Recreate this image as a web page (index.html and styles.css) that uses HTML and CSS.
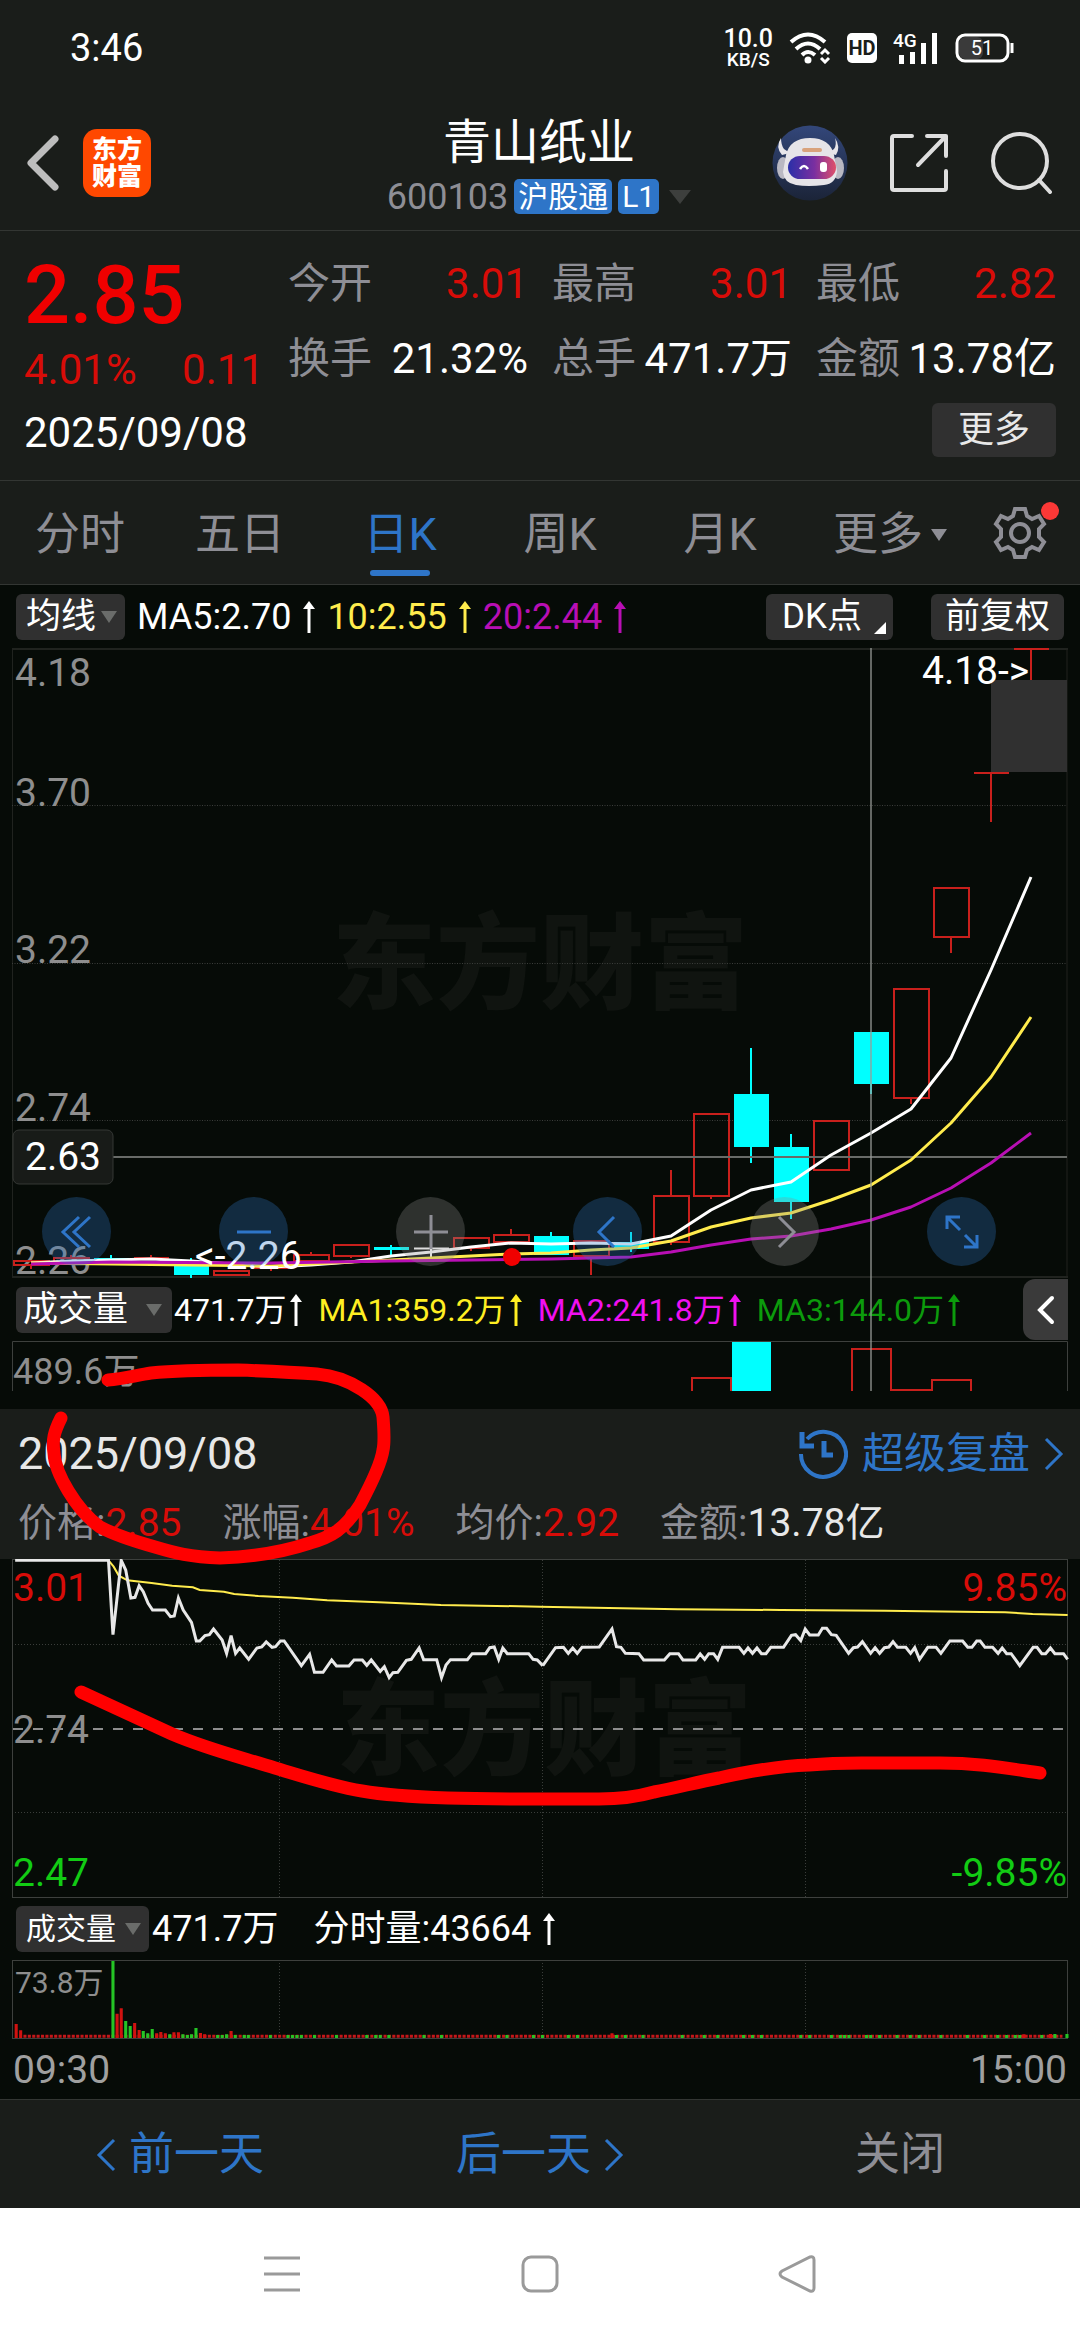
FILE: index.html
```html
<!DOCTYPE html>
<html lang="zh-CN">
<head>
<meta charset="utf-8">
<meta name="viewport" content="width=device-width, initial-scale=1">
<title>青山纸业 600103</title>
<link rel="stylesheet" href="styles.css">
</head>
<body>
<svg class="defs" width="0" height="0" aria-hidden="true">
  <symbol id="up" viewBox="0 0 12 32"><path d="M4.500 8h3v24h-3z"/><path d="M6 0l6 8H0z"/></symbol>
  <symbol id="caret" viewBox="0 0 16 12"><path d="M0 0h16L8 12z"/></symbol>
  <symbol id="next" viewBox="0 0 20 34"><path d="M2 2l15 15L2 32" fill="none" stroke="currentColor" stroke-width="3"/></symbol>
  <symbol id="prev" viewBox="0 0 20 34"><path d="M18 2L3 17l15 15" fill="none" stroke="currentColor" stroke-width="3"/></symbol>
</svg>

<div class="status">
  <time class="clock">3:46</time>
  <div class="status-icons">
    <div class="speed"><b>10.0</b><span>KB/S</span></div>
    <svg class="wifi" width="42" height="32" viewBox="0 0 42 32" fill="none" stroke="#fff" stroke-width="4">
      <path d="M2 10Q19-5 36 10M7 17Q19 6 31 17M13 23Q19 17 26 23"/><circle cx="19" cy="28" r="3.5" fill="#fff" stroke="none"/>
      <path d="M32 22l4-4 4 4M32 26l4 4 4-4" stroke-width="3"/>
    </svg>
    <svg class="hd" width="30" height="30" viewBox="0 0 30 30"><rect width="30" height="30" rx="5" fill="#fff"/><text x="15" y="22" text-anchor="middle" font-size="20" font-weight="700" fill="#1a1d1a">HD</text></svg>
    <svg class="signal" width="46" height="40" viewBox="0 -4 46 40" fill="#fff"><text x="0" y="15" font-size="19" font-weight="500">4G</text><path d="M6 23h5v9H6zM17 20h5v12h-5zM28 11h5v21h-5zM39 1h5v31h-5z"/></svg>
    <svg class="battery" width="60" height="30" viewBox="0 0 60 30"><rect x="4" y="4" width="24" height="22" rx="6" fill="#3a3a3a"/><rect x="2" y="2" width="51" height="26" rx="8" fill="none" stroke="#fff" stroke-width="3"/><path d="M57 10v10" stroke="#fff" stroke-width="3"/><text x="27" y="22" text-anchor="middle" font-size="20" fill="#fff">51</text></svg>
  </div>
</div>

<header class="header">
  <div class="header-left">
    <button class="plain" aria-label="返回"><svg width="34" height="58" viewBox="0 0 34 58" fill="none" stroke="#bdbdbd" stroke-width="7" stroke-linecap="round" stroke-linejoin="round"><path d="M29 5L5 29l24 24"/></svg></button>
    <a class="logo" href="#">东方<br>财富</a>
  </div>
  <div class="title">
    <h1>青山纸业</h1>
    <div class="code"><span>600103</span><span class="chip">沪股通</span><span class="chip">L1</span><svg class="code-caret" width="22" height="14" viewBox="0 0 16 12" preserveAspectRatio="none"><path d="M0 0h16L8 12z"/></svg></div>
  </div>
  <div class="header-right">
    <button class="plain" aria-label="智能助手"><svg width="76" height="76" viewBox="0 0 76 76">
      <defs><linearGradient id="sky" x2="0" y2="1"><stop stop-color="#33477a"/><stop offset="1" stop-color="#1b2438"/></linearGradient><linearGradient id="visor"><stop stop-color="#2a2fa8"/><stop offset=".55" stop-color="#7a2fa0"/><stop offset="1" stop-color="#e0506a"/></linearGradient></defs>
      <circle cx="38" cy="38" r="37.500" fill="url(#sky)"/>
      <path d="M9 13q-6 9 1 17l8-2-6-4q-3-4-3-11zM63 13q6 9 1 17l-8-2 6-4q3-4 1-11z" fill="#e8e6ea"/>
      <ellipse cx="11" cy="43" rx="6" ry="11" fill="#b9b8c2"/><ellipse cx="66" cy="43" rx="6" ry="11" fill="#b9b8c2"/>
      <path d="M14 30Q18 13 38 13t24 17l3 16q-1 13-13 14-16 2-28 0-12-2-13-13z" fill="#e6e4e8"/>
      <rect x="16" y="31" width="48" height="23" rx="12" fill="url(#visor)"/>
      <path d="M28 44q4-6 8 0" fill="none" stroke="#fff" stroke-width="2.500"/><rect x="48" y="37" width="7" height="10" rx="3" fill="#fff"/>
      <rect x="30" y="23" width="20" height="4" rx="2" fill="#d9a27c"/>
    </svg></button>
    <button class="plain" aria-label="分享"><svg width="60" height="60" viewBox="0 0 60 60" fill="none" stroke="#dedede" stroke-width="4" stroke-linecap="round" stroke-linejoin="round"><path d="M23 3H5q-2 0-2 2v50q0 2 2 2h50q2 0 2-2V38M38 3h19v20M57 3L29 32"/></svg></button>
    <button class="plain" aria-label="搜索"><svg width="62" height="62" viewBox="0 0 62 62" fill="none" stroke="#dedede" stroke-width="4" stroke-linecap="round"><circle cx="30" cy="29" r="27"/><path d="M49 48l11 12"/></svg></button>
  </div>
</header>

<section class="quote">
  <div class="price">
    <strong>2.85</strong>
    <div class="change"><span>4.01%</span><span>0.11</span></div>
  </div>
  <dl class="stats">
    <div><dt>今开</dt><dd class="up">3.01</dd></div>
    <div><dt>最高</dt><dd class="up">3.01</dd></div>
    <div><dt>最低</dt><dd class="up">2.82</dd></div>
    <div><dt>换手</dt><dd>21.32%</dd></div>
    <div><dt>总手</dt><dd>471.7万</dd></div>
    <div><dt>金额</dt><dd>13.78亿</dd></div>
  </dl>
  <time class="quote-date">2025/09/08</time>
  <button class="more">更多</button>
</section>

<nav class="tabs">
  <button>分时</button>
  <button>五日</button>
  <button class="active">日K</button>
  <button>周K</button>
  <button>月K</button>
  <button class="tab-more">更多<svg width="16" height="12"><use href="#caret"/></svg></button>
  <button class="gear" aria-label="设置"><svg width="54" height="54" viewBox="-27 -27 54 54" fill="none" stroke="#8e8e95" stroke-width="4"><path d="M-5-24H5L7-17 12-14 19-17 24-9 19-4V4L24 9 19 17 12 14 7 17 5 24H-5L-7 17-12 14-19 17-24 9-19 4V-4L-24-9-19-17-12-14-7-17z"/><circle r="9"/></svg><i class="dot"></i></button>
</nav>

<main>
<section class="kline">
  <div class="ma-row">
    <button class="pill">均线<svg width="16" height="12"><use href="#caret"/></svg></button>
    <span class="ma">MA5:2.70<svg width="12" height="32"><use href="#up"/></svg></span>
    <span class="ma yellow">10:2.55<svg width="12" height="32"><use href="#up"/></svg></span>
    <span class="ma purple">20:2.44<svg width="12" height="32"><use href="#up"/></svg></span>
    <button class="pill dk">DK点<svg class="corner" width="12" height="12" viewBox="0 0 12 12"><path d="M12 0v12H0z"/></svg></button>
    <button class="pill adjust">前复权</button>
  </div>
  <div class="kchart">
  <svg class="chart" viewBox="0 648 1080 630" role="img" aria-label="日K线图">
    <text class="watermark" x="540" y="1001" text-anchor="middle">东方财富</text>
    <path d="M12 649H1068M12 1277H1068" stroke="#20231f" stroke-width="2"/>
    <path d="M12.500 649V1277M1067 649V1277" stroke="#20231f"/>
    <path d="M12 805.500H1067M12 963.500H1067M12 1120.500H1067" stroke="#3a3d3a" stroke-dasharray="1 1.500"/>
    <rect x="991" y="680" width="76" height="92" fill="#303030"/>
    <g class="axis"><text x="15" y="686">4.18</text><text x="15" y="806">3.70</text><text x="15" y="963">3.22</text><text x="15" y="1121">2.74</text><text x="15" y="1274">2.26</text></g>
    <g fill="#0ff"><path d="M94 1258h35v2H94zM110 1255h2v7h-2zM174 1266h35v9h-35zM190 1258h2v20h-2zM374 1247h35v3h-35zM390 1245h2v11h-2zM534 1236h35v19h-35zM550 1232h2v5h-2zM614 1242h35v7h-35zM630 1232h2v20h-2zM734 1094h35v53h-35zM750 1048h2v115h-2zM774 1147h35v55h-35zM790 1134h2v85h-2zM854 1032h35v52h-35zM870 1084h2v10h-2z"/></g>
    <path d="M414 1248.500h35M431 1249v9" stroke="#fff" stroke-width="2" fill="none"/>
    <g fill="none" stroke="#c8201c" stroke-width="2">
      <path d="M14 1261h35v4H14zM31 1265v4M54 1258h35v4H54zM71 1255v3M134 1258h35M151 1255v3M214 1271h35v4h-35zM254 1268h35M271 1268v3M294 1255h35v6h-35zM311 1252v3M334 1245h35v11h-35zM351 1256v2M454 1238h35v10h-35zM471 1248v3M494 1235h35v7h-35zM511 1229v6M574 1241h35v15h-35zM591 1256v19M654 1196h35v46h-35zM671 1170v26M671 1242v3M694 1114h35v82h-35zM711 1196v3M814 1121h35v49h-35zM894 989h35v109h-35zM911 1098v6M934 888h35v49h-35zM951 937v16M974 773h35M991 773v49M1014 649h35M1031 649v31"/>
    </g>
    <path d="M113 1157H1067" stroke="#686b68" stroke-width="2"/>
    <g fill="none" stroke-width="3" stroke-linejoin="round">
      <path stroke="#fff" d="M31 1263L71 1261 111 1260 151 1259 191 1261 231 1264 271 1267 311 1265 351 1262 391 1256 431 1252 471 1247 511 1243 551 1244 591 1243 631 1244 671 1236 711 1210 751 1190 791 1182 831 1155 871 1133 911 1109 951 1058 991 970 1031 877"/>
      <path stroke="#ffec4d" d="M31 1263L111 1264 191 1265 271 1266 351 1262 431 1258 511 1254 551 1253 591 1250 631 1248 671 1241 711 1227 751 1218 791 1213 831 1200 871 1185 911 1160 951 1123 991 1077 1031 1017"/>
      <path stroke="#b80fb4" d="M31 1264L111 1262 271 1263 391 1261 471 1260 551 1259 591 1258 631 1257 671 1252 711 1245 751 1239 791 1236 831 1229 871 1220 911 1207 951 1188 991 1163 1031 1133"/>
    </g>
    <circle cx="512" cy="1257" r="9" fill="#f00000"/>
    <g class="mark"><text x="922" y="684">4.18-&gt;</text><text x="195" y="1269">&lt;-2.26</text></g>
    <rect x="13" y="1130" width="100" height="54" rx="6" fill="#181b18" stroke="#353835"/>
    <text class="mark" x="63" y="1170" text-anchor="middle">2.63</text>
  </svg>
  <div class="tools">
    <button class="round blue" aria-label="最前"><svg viewBox="0 0 34 34"><path d="M19 2L3 17l16 15M30 2L14 17l16 15"/></svg></button>
    <button class="round blue" aria-label="缩小"><svg viewBox="0 0 34 34"><path d="M0 17h34"/></svg></button>
    <button class="round" aria-label="放大"><svg viewBox="0 0 34 34"><path d="M0 17h34M17 0v34"/></svg></button>
    <button class="round blue" aria-label="左移"><svg viewBox="0 0 34 34"><path d="M23 2L8 17l15 15"/></svg></button>
    <button class="round" aria-label="右移"><svg viewBox="0 0 34 34"><path d="M11 2l15 15-15 15"/></svg></button>
    <button class="round blue" aria-label="全屏"><svg viewBox="0 0 34 34"><path d="M2 14V2h13M2 2l13 13M32 20v12H19M32 32L20 20"/></svg></button>
  </div>
  </div>
  <div class="vol-row">
    <button class="pill wide">成交量<svg width="16" height="12"><use href="#caret"/></svg></button>
    <span class="ma">471.7万<svg width="12" height="34"><use href="#up"/></svg></span>
    <span class="ma bright-yellow">MA1:359.2万<svg width="12" height="34"><use href="#up"/></svg></span>
    <span class="ma magenta">MA2:241.8万<svg width="12" height="34"><use href="#up"/></svg></span>
    <span class="ma green">MA3:144.0万<svg width="12" height="34"><use href="#up"/></svg></span>
    <button class="fold" aria-label="展开"><svg width="18" height="30" viewBox="0 0 18 30" fill="none" stroke="#fff" stroke-width="4" stroke-linecap="round"><path d="M15 3L3 15l12 12"/></svg></button>
  </div>
  <svg class="chart" viewBox="0 1341 1080 50" role="img" aria-label="成交量">
    <path d="M12.500 1391V1341.500H1067.500V1391" fill="none" stroke="#3d403d"/>
    <text class="axis small" x="13" y="1384">489.6万</text>
    <path d="M732 1342h39v49h-39z" fill="#0ff"/>
    <path d="M692 1391v-13h39v13M852 1391v-42h39v42M891 1390h41v-10h39v11" fill="none" stroke="#c8201c" stroke-width="2"/>
  </svg>
  <i class="crosshair"></i>
</section>

<section class="replay">
  <div class="replay-head">
    <time>2025/09/08</time>
    <a href="#"><svg width="50" height="50" viewBox="0 0 50 50" fill="none" stroke="currentColor" stroke-width="4"><path d="M3 25A22.500 22.500 0 1 0 9 10"/><path d="M4 3v14h12" stroke-width="5"/><path d="M26 12v14h9" stroke-width="5"/></svg>超级复盘<svg width="20" height="34"><use href="#next"/></svg></a>
  </div>
  <div class="facts">
    <span>价格:<b class="up">2.85</b></span><span>涨幅:<b class="up">4.01%</b></span><span>均价:<b class="up">2.92</b></span><span>金额:<b>13.78亿</b></span>
  </div>
  <div class="minute">
  <svg class="chart" viewBox="0 1559 1080 339" role="img" aria-label="分时图">
    <text class="watermark" x="544" y="1767" text-anchor="middle">东方财富</text>
    <rect x="12.500" y="1559.500" width="1055" height="338" fill="none" stroke="#3d403d"/>
    <path d="M15 1644.500H1067M15 1812.500H1067M279.500 1560V1897M542.500 1560V1897M805.500 1560V1897" stroke="#3a3d3a" stroke-dasharray="1 2"/>
    <path d="M13 1729H1067" stroke="#8e8e8e" stroke-width="2" stroke-dasharray="10 10"/>
    <g class="axis"><text x="13" y="1601" fill="#d80c08">3.01</text><text x="13" y="1743">2.74</text><text x="13" y="1886" fill="#12cc14">2.47</text>
    <g text-anchor="end"><text x="1067" y="1601" fill="#d80c08">9.85%</text><text x="1067" y="1886" fill="#12cc14">-9.85%</text></g></g>
    <g class="trace" transform="translate(0 1540) scale(.3444 .3333)">
      <path stroke="#ffec4d" stroke-width="2" d="M315 61L330 80 345 107 370 121 440 129 500 137 560 142 580 150 650 155 680 162 750 168 850 173 950 181 1100 187 1280 195 1568 200 1768 204 1968 208 2268 210 2568 212 2848 216 2918 217 2998 222 3100 225"/>
      <path stroke="#e8e8e8" stroke-width="3" d="M44 61H315L328 284 352 61 365 90 380 174 392 172 404 137 416 155 430 190 443 210H480L495 230 506 228 518 174 532 210 556 247 570 303H580L595 287 608 284 620 267 645 300 658 340 671 287 684 340 696 324 722 358 746 324 760 321 773 306 790 322 800 320 814 303H825L875 377 899 343 913 397H938L963 360 977 378H1013L1028 360H1052L1065 376 1078 360 1104 394 1116 380 1130 413 1141 398 1155 397 1180 361 1194 358 1217 324 1230 359H1268L1282 413 1295 375 1308 359H1357L1371 341H1410L1422 323 1435 321 1448 358 1460 324 1473 341H1535L1548 358 1560 360 1576 377"/>
      <path transform="translate(1568 0)" stroke="#e8e8e8" stroke-width="3" d="M8 377L45 323 68 322 82 340 95 324 108 340 122 322 172 321 209 267 222 320 235 322 248 340 287 341 301 360H361L377 341H402L415 360H452L465 342 478 358 490 341H504L516 358 530 322H578L592 340 604 324 617 340 630 324 643 341H656L670 322H707L730 286 742 284 757 302 770 267 783 285H808L820 265H832L846 284 860 286 896 340 910 323 922 321 936 305 960 340 973 323 986 340 1000 323 1013 321 1025 305 1038 322H1062L1076 340 1088 323 1102 358 1126 322H1150L1164 340 1190 303H1227L1242 322H1254L1268 303H1278L1292 322H1314L1330 340 1342 324 1355 341H1368L1393 377 1432 322H1443L1457 341H1468L1482 324 1495 341H1520L1532 358"/>
    </g>
  </svg>
  <svg class="doodle" viewBox="0 1559 1080 339" aria-hidden="true">
    <path d="M108 1380C124 1379 137 1375 151 1373 180 1370 208 1370 238 1370 265 1371 290 1372 317 1374 350 1377 381 1398 383 1417 384 1430 385 1441 383 1450 381 1465 368 1490 360 1505 344 1530 331 1537 310 1543 280 1553 250 1557 220 1558 190 1557 175 1553 155 1547 130 1540 115 1535 100 1527 76 1510 55 1473 54 1453 52 1440 54 1432 61 1418"/>
    <path d="M81 1692L172 1734C207 1749 240 1757 275 1768 305 1777 332 1786 362 1791 390 1796 418 1797 448 1798 480 1799 510 1799 540 1799H599C620 1799 640 1796 654 1792 676 1788 697 1782 719 1778 750 1771 780 1766 809 1765 840 1762 860 1763 884 1763H940C978 1763 1005 1768 1040 1773"/>
  </svg>
  </div>
  <div class="min-row">
    <button class="pill tight">成交量<svg width="16" height="12"><use href="#caret"/></svg></button>
    <span>471.7万</span>
    <span class="ma">分时量:43664<svg width="12" height="32"><use href="#up"/></svg></span>
  </div>
  <svg class="chart" viewBox="0 1960 1080 79" role="img" aria-label="分时成交量">
    <rect x="12.500" y="1960.500" width="1055" height="78" fill="none" stroke="#3d403d"/>
    <path d="M279.500 1963V2035M542.500 1963V2035M805.500 1963V2035" stroke="#3a3d3a" stroke-dasharray="1 2"/>
    <text class="axis tiny" x="15" y="1993">73.8万</text>
    <g transform="translate(0 1900) scale(.3444 .3333)" fill="none" stroke-width="9">
      <path stroke="#c4171a" stroke-dasharray="9 3.750" d="M68 409H3085"/>
      <path stroke="#d01210" d="M47 372V414M60 391V414M340 341V414M352 325V414M391 369V414M404 390V414M455 400V414M467 396V414M480 400V414M505 397V414M518 397V414M582 399V414M594 403V414M671 393V414M1777 400V414M2973 403V414M3050 402V414"/>
      <path stroke="#25c425" d="M328 183V414M365 363V414M378 378V414M416 393V414M429 400V414M442 387V414M493 403V414M531 403V414M544 405V414M556 403V414M569 384V414M3063 402V414M3098 402V414M632 405v9M645 405v9M658 403v11M683 405v9M709 405v9M721 405v9M785 405v9M836 405v9M849 405v9M862 405v9M875 405v9M913 405v9M977 405v9M1065 405v9M1091 405v9M1104 405v9M1129 405v9M1231 405v9M1282 405v9M1447 405v9M1472 405v9M1549 405v9M1575 405v9M1650 405v9M1677 405v9M1790 405v9M1816 405v9M1867 405v9M1981 405v9M2045 405v9M2084 405v9M2159 405v9M2185 405v9M2211 405v9M2325 405v9M2351 405v9M2414 405v9M2440 405v9M2452 405v9M2465 405v9M2516 405v9M2528 405v9M2554 405v9M2605 405v9M2643 405v9M2669 405v9M2732 405v9M2809 405v9M2859 405v9M2897 405v9M2923 405v9M2948 405v9M2961 405v9M3025 405v9"/>
    </g>
  </svg>
  <div class="hours"><time>09:30</time><time>15:00</time></div>
  <div class="actions">
    <button><svg width="20" height="34"><use href="#prev"/></svg>前一天</button>
    <button>后一天<svg width="20" height="34"><use href="#next"/></svg></button>
    <button class="close">关闭</button>
  </div>
</section>
</main>

<nav class="system">
  <button class="plain" aria-label="最近任务"><svg width="40" height="40" viewBox="0 0 40 40"><path d="M2 4h36M2 20h36M2 36h36"/></svg></button>
  <button class="plain" aria-label="主屏幕"><svg width="40" height="40" viewBox="0 0 40 40"><rect x="3" y="3" width="34" height="34" rx="8"/></svg></button>
  <button class="plain" aria-label="返回"><svg width="40" height="40" viewBox="0 0 40 40"><path d="M4 17L32 3q4-1 4 3v28q0 4-4 3L4 23q-4-3 0-6z"/></svg></button>
</nav>
</body>
</html>
```
FILE: styles.css
```css
* { box-sizing: border-box; }

body {
  margin: 0;
  background: #1a1d1a;
  color: #fff;
  font-family: Roboto, "Noto Sans CJK SC", sans-serif;
  font-size: 36px;
  line-height: 48px;
}

button {
  font: inherit;
  color: inherit;
  border: 0;
  padding: 0;
  background: none;
}

a { color: inherit; text-decoration: none; }
svg { display: block; flex: none; }
dl, dd, h1 { margin: 0; }
.defs { position: absolute; }
.plain { display: flex; }
.up { color: #d80c08; }

/* Phone status bar */
.status {
  display: flex;
  justify-content: space-between;
  align-items: center;
  height: 96px;
  padding: 0 65px 0 70px;
}
.clock { font-size: 38px; }
.status-icons { display: flex; align-items: center; gap: 16px; }
.speed {
  display: flex;
  flex-direction: column;
  align-items: center;
  font-size: 19px;
  font-weight: 500;
  line-height: 18px;
}
.speed b { font-size: 25px; font-weight: 500; line-height: 24px; }

/* Title bar */
.header {
  display: grid;
  grid-template-columns: 1fr auto 1fr;
  align-items: center;
  height: 135px;
  padding: 0 28px 0 26px;
  border-bottom: 1px solid #333633;
}
.header-left { display: flex; align-items: center; gap: 23px; }
.logo {
  width: 68px;
  height: 68px;
  padding-top: 7px;
  border-radius: 14px;
  background: #ff4800;
  font-size: 25px;
  font-weight: 900;
  line-height: 27px;
  text-align: center;
}
.title { padding-top: 7px; text-align: center; }
.title h1 { font-size: 48px; font-weight: 400; line-height: 60px; }
.code {
  display: flex;
  align-items: center;
  gap: 6px;
  color: #8e8e95;
  line-height: 48px;
}
.chip {
  padding: 0 4px;
  border-radius: 5px;
  background: #2e75c8;
  color: #fff;
  font-size: 30px;
  line-height: 35px;
}
.code-caret { margin-left: 4px; fill: #3d3f3d; }
.header-right {
  display: flex;
  justify-content: flex-end;
  align-items: center;
  gap: 41px;
}

/* Price summary */
.quote {
  display: grid;
  grid-template-columns: 240px 1fr;
  column-gap: 24px;
  height: 250px;
  padding: 22px 24px 18px;
  border-bottom: 1px solid #333633;
  font-size: 42px;
}
.price { color: #f00000; }
.price strong {
  display: block;
  font-size: 81px;
  font-weight: 500;
  line-height: 86px;
}
.change {
  display: flex;
  justify-content: space-between;
  color: #d80c08;
  line-height: 62px;
}
.stats {
  display: grid;
  grid-template-columns: repeat(3, 1fr);
  grid-auto-rows: 75px;
  column-gap: 24px;
}
.stats div { display: flex; justify-content: space-between; line-height: 62px; white-space: nowrap; }
.stats dt { color: #8e8e95; }
.quote-date { line-height: 60px; }
.more {
  justify-self: end;
  width: 124px;
  height: 54px;
  border-radius: 6px;
  background: #303030;
  color: #e8e8e8;
  font-size: 36px;
}

/* Period tabs */
.tabs {
  display: grid;
  grid-template-columns: repeat(6, 4fr) 3fr;
  height: 104px;
  border-bottom: 1px solid #333633;
  color: #8e8e95;
  font-size: 45px;
}
.tabs button {
  display: flex;
  align-items: center;
  justify-content: center;
  position: relative;
  padding-top: 4px;
}
.tabs .gear { padding-top: 0; }
.tabs .active { color: #2e75c8; }
.active::after {
  content: "";
  position: absolute;
  bottom: 8px;
  width: 60px;
  height: 6px;
  border-radius: 3px;
  background: #2e75c8;
}
.tab-more { gap: 8px; fill: currentColor; }
.tabs .tab-more { padding-left: 20px; }
.dot {
  position: absolute;
  top: 21px;
  right: 21px;
  width: 18px;
  height: 18px;
  border-radius: 50%;
  background: #fb3836;
}

/* Daily candles */
.kline {
  position: relative;
  padding-bottom: 18px;
  background: #060b07;
}
.chart { width: 100%; height: auto; }
.chart text { font-size: 39px; }
.chart .small { font-size: 36px; }
.chart .tiny { font-size: 30px; }
.chart .watermark { font-size: 104px; font-weight: 900; fill: #101410; }
.axis { fill: #8e8e8e; }
.mark { fill: #fff; }
.ma-row, .vol-row, .min-row {
  display: flex;
  align-items: center;
  height: 63px;
  padding: 0 16px;
  white-space: nowrap;
}
.ma-row { gap: 12px; }
.pill {
  display: flex;
  align-items: center;
  gap: 5px;
  height: 46px;
  padding: 0 8px 0 10px;
  border-radius: 6px;
  background: #303030;
  font-size: 35px;
}
.pill svg { fill: #6a6c6a; }
.pill.dk { position: relative; margin-left: auto; margin-right: 26px; padding: 0 31px 0 16px; }
.pill.adjust { padding: 0 14px; }
.pill .corner { position: absolute; right: 7px; bottom: 6px; fill: #fff; }
.ma { display: flex; align-items: center; gap: 12px; }
.ma svg { fill: currentColor; }
.yellow { color: #ffec4d; }
.purple { color: #b80fb4; }
.bright-yellow { color: #ffee22; }
.magenta { color: #f010f0; }
.green { color: #0c9b0c; }
.kchart { position: relative; }
.tools {
  position: absolute;
  left: 42px;
  right: 84px;
  bottom: 12px;
  display: flex;
  justify-content: space-between;
}
.round {
  display: flex;
  align-items: center;
  justify-content: center;
  width: 69px;
  height: 69px;
  border-radius: 50%;
  background: rgba(140, 140, 140, 0.3);
  color: #8e8e95;
}
.round.blue { background: rgba(48, 118, 200, 0.3); color: #2e75c8; }
.round svg { width: 34px; height: 34px; fill: none; stroke: currentColor; stroke-width: 3; }
.vol-row { gap: 16px; padding-right: 12px; font-size: 32px; }
.vol-row .ma { gap: 4px; }
.pill.wide { gap: 18px; padding: 0 10px 0 7px; margin-right: -14px; }
.fold {
  display: flex;
  align-items: center;
  justify-content: center;
  width: 45px;
  height: 61px;
  margin-left: auto;
  border-radius: 12px 0 0 12px;
  background: #3a3a3a;
}
.crosshair {
  position: absolute;
  top: 63px;
  bottom: 18px;
  left: 80.6%;
  width: 2px;
  background: rgba(150, 155, 150, 0.65);
}

/* Single-day replay panel */
.replay-head {
  display: flex;
  justify-content: space-between;
  align-items: center;
  height: 90px;
  padding: 0 16px 0 18px;
  color: #e8e8e8;
  font-size: 45px;
}
.replay-head a { display: flex; align-items: center; gap: 14px; color: #2e75c8; font-size: 42px; }
.facts {
  display: flex;
  gap: 41px;
  height: 60px;
  padding-left: 18px;
  color: #8e8e95;
  font-size: 39px;
  line-height: 48px;
}
.facts b { font-weight: 400; }
.facts b:not(.up) { color: #e8e8e8; }
.minute, .min-row, .hours, .replay > .chart { background: #060b07; }
.minute { position: relative; }
.trace path { fill: none; vector-effect: non-scaling-stroke; }
.doodle {
  position: absolute;
  inset: 0;
  width: 100%;
  height: 100%;
  overflow: visible;
  fill: none;
  stroke: #f00;
  stroke-width: 13;
  stroke-linecap: round;
  pointer-events: none;
}
.min-row { height: 62px; gap: 3px; }
.min-row .ma { margin-left: 32px; }
.pill.tight { gap: 9px; font-size: 30px; }
.hours {
  display: flex;
  justify-content: space-between;
  height: 60px;
  padding: 7px 13px;
  color: #a0a0a0;
  font-size: 39px;
}
.actions {
  display: grid;
  grid-template-columns: repeat(3, 1fr);
  height: 109px;
  border-top: 1px solid #333633;
  color: #2e75c8;
  font-size: 45px;
}
.actions button { display: flex; align-items: center; justify-content: center; gap: 13px; padding-top: 2px; }
.actions .close { color: #8e8e95; }

/* Phone navigation keys */
.system {
  display: flex;
  justify-content: center;
  align-items: center;
  gap: 218px;
  height: 132px;
  background: #fff;
}
.system svg { fill: none; stroke: #9a9a9a; stroke-width: 3; }
```
